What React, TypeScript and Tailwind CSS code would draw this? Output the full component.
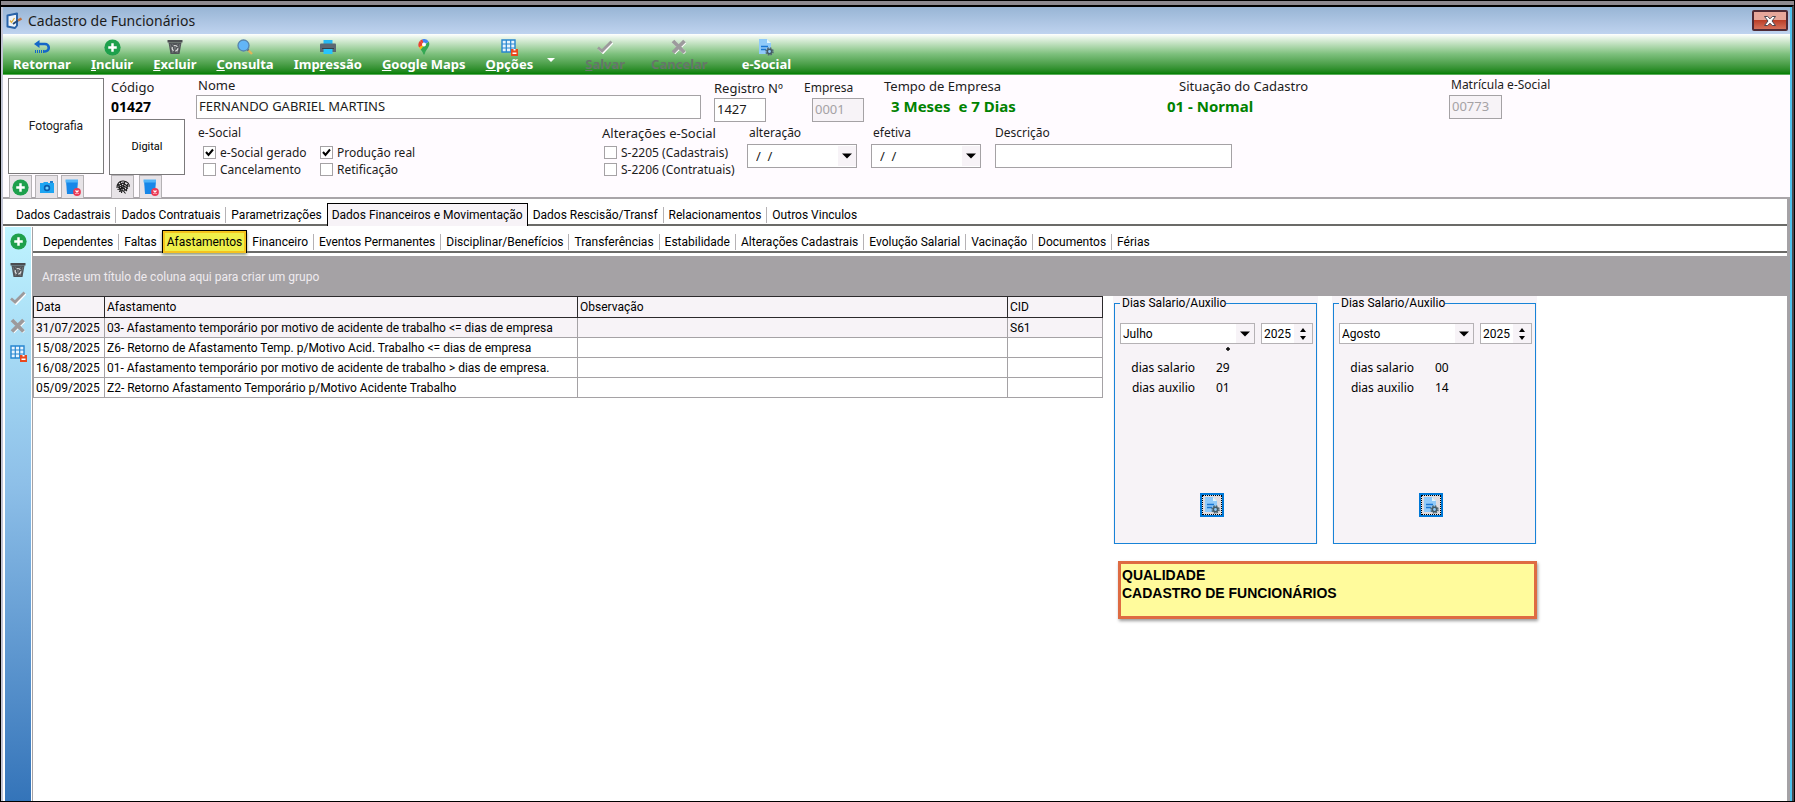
import { useState } from "react";
import type { ReactNode } from "react";
import clsx from "clsx";

const mainTabs = [
    "Dados Cadastrais",
    "Dados Contratuais",
    "Parametrizações",
    "Dados Financeiros e Movimentação",
    "Dados Rescisão/Transf",
    "Relacionamentos",
    "Outros Vinculos",
];

const subTabs = [
    "Dependentes",
    "Faltas",
    "Afastamentos",
    "Financeiro",
    "Eventos Permanentes",
    "Disciplinar/Benefícios",
    "Transferências",
    "Estabilidade",
    "Alterações Cadastrais",
    "Evolução Salarial",
    "Vacinação",
    "Documentos",
    "Férias",
];

const rows = [
    ["31/07/2025", "03- Afastamento temporário por motivo de acidente de trabalho <= dias de empresa", "", "S61"],
    ["15/08/2025", "Z6- Retorno de Afastamento Temp. p/Motivo Acid. Trabalho <= dias de empresa", "", ""],
    ["16/08/2025", "01- Afastamento temporário por motivo de acidente de trabalho > dias de empresa.", "", ""],
    ["05/09/2025", "Z2- Retorno Afastamento Temporário p/Motivo Acidente Trabalho", "", ""],
];

const months = ["Julho", "Agosto", "Setembro"];

export default function App() {
    return (
        <div className="flex min-h-screen flex-col border border-black bg-[#8e8a90] pt-1 font-['Noto_Sans',sans-serif] text-[13px] leading-4 text-[#1c1c1c]">
            <div className="flex grow flex-col border-t-2 border-r-2 border-t-black border-r-[#4b4b50]">
                <div className="flex grow flex-col border-r-2 border-l-2 border-r-[#4fc3ee] border-l-[#c3c6d6] bg-white">
                    <TitleBar />
                    <Toolbar />
                    <EmployeeHeader />
                    <Workspace />
                </div>
            </div>
        </div>
    );
}

function TitleBar() {
    return (
        <header className="flex h-[27px] items-center justify-between bg-linear-to-b from-[#98b5d5] to-[#bfd3ef] pl-0.5">
            <div className="flex items-center gap-[5px]">
                <FormIcon />
                <h1 className="text-sm leading-5">Cadastro de Funcionários</h1>
            </div>
            <button
                aria-label="Fechar"
                className="mr-0.5 flex h-[21px] w-9 items-center justify-center rounded-xs border-2 border-[#4e2a35] bg-linear-to-b from-[#e7a79b] from-50% via-[#bb3f27] via-50% to-[#d5705a]"
            >
                <svg viewBox="0 0 14 12" className="h-3 w-3.5 shrink-0" aria-hidden>
                    <path d="M1.500 1.500h3.200L7 3.800l2.300-2.300h3.200L9 6l3.500 4.500H9.300L7 8.200 4.700 10.500H1.500L5 6Z" fill="#fff" stroke="#4b4650" />
                </svg>
            </button>
        </header>
    );
}

function Toolbar() {
    return (
        <nav className="flex h-[41px] items-start border-b border-[#5cab5c] bg-linear-to-b from-white via-[#7dc07d] via-50% to-[#008000] pt-1 text-white">
            <Tool icon={<UndoIcon />}>Retornar</Tool>
            <Tool icon={<PlusIcon />}><u>I</u>ncluir</Tool>
            <Tool icon={<TrashIcon />}><u>E</u>xcluir</Tool>
            <Tool icon={<SearchIcon />}><u>C</u>onsulta</Tool>
            <Tool icon={<PrinterIcon />}>Imp<u>r</u>essão</Tool>
            <Tool icon={<PinIcon />}><u>G</u>oogle Maps</Tool>
            <Tool icon={<GridIcon />}><u>O</u>pções</Tool>
            <button aria-label="Mais opções" className="mt-5 mr-4 px-1">
                <svg viewBox="0 0 8 4" className="h-1 w-2" aria-hidden>
                    <path d="M0 0h8L4 4Z" fill="#fff" />
                </svg>
            </button>
            <div className="flex gap-1.5 pr-3.5">
                <Tool icon={<CheckIcon />} disabled><u>S</u>alvar</Tool>
                <Tool icon={<CrossIcon />} disabled>Cancelar</Tool>
            </div>
            <Tool icon={<DocIcon />}>e-Social</Tool>
        </nav>
    );
}

function Tool({ icon, disabled, children }: { icon: ReactNode; disabled?: boolean; children: ReactNode }) {
    return (
        <button
            disabled={disabled}
            className={clsx(
                "flex flex-col items-center px-2.5 text-[13px] leading-4 font-bold",
                disabled && "text-[#66766a]"
            )}
        >
            <span className="flex h-[18px] items-center">{icon}</span>
            <span>{children}</span>
        </button>
    );
}

function EmployeeHeader() {
    return (
        <section className="flex h-[124px] items-start border-b-2 border-[#a9a5a9] bg-[#fffbff] pl-[5px]">
            <div className="mt-[3px] flex w-[101px] flex-col gap-px">
                <div className="flex h-24 w-24 items-center justify-center border border-[#7b797b] bg-white font-['Roboto',sans-serif] text-xs">
                    Fotografia
                </div>
                <div className="flex gap-[3px] pl-px">
                    <SmallButton label="Incluir fotografia"><PlusIcon /></SmallButton>
                    <SmallButton label="Câmera"><CameraIcon /></SmallButton>
                    <SmallButton label="Excluir fotografia"><BinIcon /></SmallButton>
                </div>
            </div>
            <div className="mt-1 w-[87px]">
                <div className="pl-0.5">Código</div>
                <div className="mt-0.5 mb-0.5 pl-0.5 text-sm leading-5 font-bold text-black">01427</div>
                <div className="flex h-14 w-[76px] items-center justify-center border border-[#7b797b] bg-white font-['Roboto',sans-serif] text-[11px] text-black">
                    Digital
                </div>
                <div className="flex gap-[5px] pl-0.5">
                    <SmallButton label="Ler digital"><FingerIcon /></SmallButton>
                    <SmallButton label="Excluir digital"><BinIcon /></SmallButton>
                </div>
            </div>

            <div className="grow">
                <div className="grid grid-cols-[518px_90px_80px_283px_282px_1fr]">
                    <div>
                        <label htmlFor="nome" className="block pl-0.5 leading-5">Nome</label>
                        <input id="nome" defaultValue="FERNANDO GABRIEL MARTINS" className="h-6 w-[505px] border border-[#a5a2a5] bg-white px-0.5 pb-0.5 outline-none" />
                    </div>
                    <div className="pt-[3px]">
                        <label htmlFor="registro" className="block leading-5">Registro Nº</label>
                        <input id="registro" defaultValue="1427" className="h-6 w-[52px] border border-[#a5a2a5] bg-white px-0.5 pb-0.5 outline-none" />
                    </div>
                    <div className="pt-[3px]">
                        <label htmlFor="empresa" className="block text-xs leading-5">Empresa</label>
                        <input id="empresa" disabled defaultValue="0001" className="ml-2 h-6 w-[52px] border border-[#a5a2a5] bg-[#f7f3f7] px-0.5 pb-0.5 text-[#a5a2a5]" />
                    </div>
                    <div className="pt-[3px]">
                        <div>Tempo de Empresa</div>
                        <div className="mt-0.5 pl-[7px] text-[15px] leading-5 font-bold whitespace-pre text-[#008200]">3 Meses  e 7 Dias</div>
                    </div>
                    <div className="pt-[3px]">
                        <div className="pl-3">Situação do Cadastro</div>
                        <div className="mt-0.5 text-[15px] leading-5 font-bold text-[#008200]">01 - Normal</div>
                    </div>
                    <div>
                        <label htmlFor="matricula" className="block pl-0.5 text-xs leading-5">Matrícula e-Social</label>
                        <input id="matricula" disabled defaultValue="00773" className="h-6 w-[53px] border border-[#a5a2a5] bg-[#f7f3f7] px-0.5 pb-0.5 text-[#a5a2a5]" />
                    </div>
                </div>
                <div className="grid grid-cols-[406px_145px_124px_124px_1fr]">
                    <div>
                        <div className="pl-0.5 text-xs leading-[22px]">e-Social</div>
                        <div className="grid grid-cols-[117px_120px] pl-[7px]">
                            <Check label="e-Social gerado" checked />
                            <Check label="Produção real" checked />
                            <Check label="Cancelamento" />
                            <Check label="Retificação" />
                        </div>
                    </div>
                    <div>
                        <div className="leading-[22px]">Alterações e-Social</div>
                        <div className="pl-0.5">
                            <Check label="S-2205 (Cadastrais)" />
                            <Check label="S-2206 (Contratuais)" />
                        </div>
                    </div>
                    <DateField id="alteracao" label="alteração" />
                    <DateField id="efetiva" label="efetiva" />
                    <div>
                        <label htmlFor="descricao" className="block text-xs leading-[22px]">Descrição</label>
                        <input id="descricao" className="h-6 w-[237px] border border-[#a5a2a5] bg-white px-0.5 outline-none" />
                    </div>
                </div>
            </div>
        </section>
    );
}

function SmallButton({ label, children }: { label: string; children: ReactNode }) {
    return (
        <button aria-label={label} className="flex h-[23px] w-[23px] items-center justify-center border border-b-0 border-[#b5b2b5] bg-[#e7e3e7]">
            {children}
        </button>
    );
}

function Check({ label, checked }: { label: string; checked?: boolean }) {
    return (
        <label className="flex items-center gap-1 text-xs leading-[17px] whitespace-nowrap">
            <span className="relative flex h-[13px] w-[13px]">
                <input type="checkbox" defaultChecked={checked} className="peer h-[13px] w-[13px] appearance-none border border-[#a5a2a5] bg-white" />
                <svg viewBox="0 0 13 13" className="pointer-events-none absolute inset-0 hidden peer-checked:block" aria-hidden>
                    <path d="m3 6 2.500 3L10 3.500" fill="none" stroke="#000" strokeWidth="2" />
                </svg>
            </span>
            {label}
        </label>
    );
}

function DateField({ id, label }: { id: string; label: string }) {
    return (
        <div>
            <label htmlFor={id} className="block pl-0.5 text-xs leading-[22px]">{label}</label>
            <div className="flex h-6 w-[110px] border border-[#a5a2a5] bg-white">
                <input id={id} defaultValue="/  /" className="min-w-0 grow pl-2 whitespace-pre outline-none" />
                <button aria-label={`Abrir ${label}`} className="my-px flex w-[18px] shrink-0 items-center justify-center bg-[#f7f3f7]">
                    <Caret />
                </button>
            </div>
        </div>
    );
}

function Workspace() {
    const [main, setMain] = useState(mainTabs[3]);
    const [sub, setSub] = useState(subTabs[2]);

    return (
        <main className="flex grow flex-col border-r-[3px] border-[#a5a2a5] font-['Roboto',sans-serif] text-black">
            <div role="tablist" className="flex h-[27px] items-end border-b-2 border-[#6b6b68] pl-2">
                {mainTabs.map((t, i) => (
                    <Tab key={t} active={t === main} divider={i > 0 && t !== main && mainTabs[i - 1] !== main} onClick={() => setMain(t)}>
                        {t}
                    </Tab>
                ))}
            </div>
            <div className="flex grow pt-px pl-0.5">
                <aside className="flex w-[26px] flex-col items-center gap-[11px] bg-linear-to-b from-[#bff4ff] via-[#8dbfe8] via-45% to-[#3474b9] pt-1.5">
                    <SideButton label="Incluir"><PlusIcon /></SideButton>
                    <SideButton label="Excluir"><TrashIcon /></SideButton>
                    <SideButton label="Salvar"><CheckIcon /></SideButton>
                    <SideButton label="Cancelar"><CrossIcon /></SideButton>
                    <SideButton label="Opções"><GridIcon /></SideButton>
                </aside>
                <div className="ml-px flex min-w-0 grow flex-col border-l border-[#a5a2a5]">
                    <div role="tablist" className="flex h-[26px] items-end border-b-2 border-[#6b6b68] pl-[5px]">
                        {subTabs.map((t, i) => (
                            <Tab key={t} marked active={t === sub} divider={i > 0 && t !== sub && subTabs[i - 1] !== sub} onClick={() => setSub(t)}>
                                {t}
                            </Tab>
                        ))}
                    </div>
                    <div className="mt-[3px] flex h-10 items-center bg-[#a5a2a5] pt-0.5 pl-[9px] text-xs text-[#efebef]">
                        Arraste um título de coluna aqui para criar um grupo
                    </div>
                    <div className="flex items-start">
                        <LeaveTable />
                        <div className="ml-2.5">
                            <div className="flex gap-3.5">
                                <DaysPanel id="julho" month="Julho" salary="29" aid="01" marker />
                                <DaysPanel id="agosto" month="Agosto" salary="00" aid="14" />
                            </div>
                            <div className="mt-[17px] ml-[5px] h-[58px] border-[3px] border-[#de6b42] bg-[#fffb9c] pl-px font-['Liberation_Sans',sans-serif] text-sm leading-[18px] font-bold shadow-[1px_2px_3px_#9b9b9b]">
                                <p className="pt-0.5">QUALIDADE</p>
                                <p>CADASTRO DE FUNCIONÁRIOS</p>
                            </div>
                        </div>
                    </div>
                </div>
            </div>
        </main>
    );
}

function Tab({
    active,
    divider,
    marked,
    onClick,
    children,
}: {
    active: boolean;
    divider: boolean;
    marked?: boolean;
    onClick: () => void;
    children: ReactNode;
}) {
    return (
        <button
            role="tab"
            aria-selected={active}
            onClick={onClick}
            className={clsx(
                "relative flex items-center text-xs leading-4 whitespace-nowrap",
                active ? "z-10 -mb-0.5 h-[23px] border-x border-t border-black px-1" : "h-[18px] px-[5px]",
                active && marked && "bg-[#efef4a] shadow-[inset_0_0_0_2px_#f5c31d,0_2px_3px_#8f9a80]",
                active && !marked && "bg-[#f7f3f7]"
            )}
        >
            {divider && <span className="-ml-[5px] mr-[5px] h-4 w-px bg-[#b5b2b5]" />}
            {children}
        </button>
    );
}

function SideButton({ label, children }: { label: string; children: ReactNode }) {
    return (
        <button aria-label={label} className="flex h-[17px] items-center">
            {children}
        </button>
    );
}

function LeaveTable() {
    return (
        <table className="w-[1070px] table-fixed border-collapse text-left text-xs">
            <colgroup>
                <col className="w-[71px]" />
                <col className="w-[473px]" />
                <col className="w-[430px]" />
                <col />
            </colgroup>
            <thead>
                <tr className="h-[21px] bg-[#f7f3f7]">
                    {["Data", "Afastamento", "Observação", "CID"].map((h) => (
                        <th key={h} className="border border-[#2b292b] px-0.5 py-0 font-normal">{h}</th>
                    ))}
                </tr>
            </thead>
            <tbody>
                {rows.map((r, i) => (
                    <tr key={r[0]} className={clsx("h-5", i === 0 && "bg-[#f7f3f7]")}>
                        {r.map((cell, c) => (
                            <td key={c} className="border border-[#a5a2a5] px-0.5 py-0 whitespace-nowrap">{cell}</td>
                        ))}
                    </tr>
                ))}
            </tbody>
        </table>
    );
}

function DaysPanel({
    id,
    month,
    salary,
    aid,
    marker,
}: {
    id: string;
    month: string;
    salary: string;
    aid: string;
    marker?: boolean;
}) {
    return (
        <div className="bg-[#f7f3f7] px-px">
            <fieldset className="h-[248px] w-[203px] border border-[#1883d7] pl-[5px] text-xs">
                <legend className="pl-0.5 leading-[14px]">Dias Salario/Auxilio</legend>
                <div className="mt-[13px] flex gap-1.5">
                    <span className="relative">
                        <select aria-label="Mês" defaultValue={month} className="h-[21px] w-[135px] appearance-none border border-[#b5b2b5] bg-white px-0.5 outline-none">
                            {months.map((m) => (
                                <option key={m}>{m}</option>
                            ))}
                        </select>
                        <span className="pointer-events-none absolute inset-y-px right-px flex w-[18px] items-center justify-center bg-[#f7f3f7]">
                            <Caret />
                        </span>
                    </span>
                    <span className="flex h-[21px] w-[52px] border border-[#b5b2b5] bg-white">
                        <input aria-label="Ano" defaultValue="2025" className="min-w-0 grow pl-0.5 outline-none" />
                        <span className="flex w-[18px] shrink-0 flex-col justify-center gap-1 bg-[#f7f3f7]">
                            <button aria-label="Próximo ano" className="flex justify-center">
                                <svg viewBox="0 0 6 4" className="h-1 w-1.5" aria-hidden><path d="M0 4h6L3 0Z" /></svg>
                            </button>
                            <button aria-label="Ano anterior" className="flex justify-center">
                                <svg viewBox="0 0 6 4" className="h-1 w-1.5" aria-hidden><path d="M0 0h6L3 4Z" /></svg>
                            </button>
                        </span>
                    </span>
                </div>
                <div className="flex h-4 justify-end pr-[86px]">
                    {marker && (
                        <svg viewBox="0 0 4 4" className="mt-[3px] h-1 w-1" aria-hidden>
                            <path d="M2 0v4M0 2h4" stroke="#000" strokeWidth="1.400" />
                        </svg>
                    )}
                </div>
                <dl className="grid grid-cols-[75px_auto] gap-x-[21px] gap-y-1 font-['Noto_Sans',sans-serif]">
                    <dt className="text-right">dias salario</dt>
                    <dd id={`${id}-salario`}>{salary}</dd>
                    <dt className="text-right">dias auxilio</dt>
                    <dd id={`${id}-auxilio`}>{aid}</dd>
                </dl>
                <button aria-label={`Calcular ${month}`} className="mt-[97px] ml-20 flex h-6 w-6 items-center justify-center border-2 border-[#0078d7] bg-[#dedbde] outline-1 -outline-offset-3 outline-dotted outline-black">
                    <DocIcon />
                </button>
            </fieldset>
        </div>
    );
}

function Caret() {
    return (
        <svg viewBox="0 0 10 6" className="h-1.5 w-2.5" aria-hidden>
            <path d="M0 0.500h10L5 5.500Z" />
        </svg>
    );
}

function FormIcon() {
    return (
        <svg viewBox="0 0 18 18" className="h-[18px] w-[18px]" aria-hidden>
            <path d="M2.500 3.500 12 1.500v12l-2 2.500-7.500-1.500Z" fill="#eef4fb" stroke="#2a63a8" strokeWidth="2" strokeLinejoin="round" />
            <path d="m5 8.500 1.500 2L9.500 6" fill="none" stroke="#e0b040" strokeWidth="1.300" />
            <path d="m8 12 5-3.500" stroke="#274a75" strokeWidth="2" />
            <path d="m13 8.500 3.500-2" stroke="#c2703a" strokeWidth="2.500" />
        </svg>
    );
}

function UndoIcon() {
    return (
        <svg viewBox="0 0 16 14" className="h-3.5 w-4" aria-hidden>
            <path d="M4 4h7a3.500 3.500 0 0 1 0 7.500h-1" fill="none" stroke="#1467c8" strokeWidth="2.600" />
            <path d="M5.500 0v8L0 4Z" fill="#1467c8" />
            <path d="M1 11.500h9" stroke="#1467c8" strokeWidth="3" strokeDasharray="1 1" />
        </svg>
    );
}

function PlusIcon() {
    return (
        <svg viewBox="0 0 18 18" className="h-[17px] w-[17px]" aria-hidden>
            <circle cx="9" cy="9" r="8.600" fill="#1ea04c" />
            <path d="M9 4.500v9M4.500 9h9" stroke="#fff" strokeWidth="2.600" />
        </svg>
    );
}

function TrashIcon() {
    return (
        <svg viewBox="0 0 16 16" className="h-4 w-4" aria-hidden>
            <path d="M0.500 1h15v2.500h-15Z" fill="#4a4c50" />
            <path d="M1.500 3.500h13l-2 11.500h-9Z" fill="#505357" />
            <path d="m3 5 3 9M13 5l-3 9M5 4.500l6 9M11 4.500l-6 9" stroke="#8d9093" strokeWidth="0.500" />
            <circle cx="8" cy="9.300" r="2.800" fill="none" stroke="#dcdcdc" strokeWidth="1.200" strokeDasharray="4 1.800" />
        </svg>
    );
}

function SearchIcon() {
    return (
        <svg viewBox="0 0 16 16" className="h-4 w-4" aria-hidden>
            <path d="m11 11 4 4" stroke="#e0b35a" strokeWidth="2.400" />
            <path d="m9.500 9.500 2 2" stroke="#5d6f80" strokeWidth="2" />
            <circle cx="6.500" cy="6.500" r="5.500" fill="#62b5f7" stroke="#5784ad" strokeWidth="1.300" />
        </svg>
    );
}

function PrinterIcon() {
    return (
        <svg viewBox="0 0 16 14" className="h-3.5 w-4" aria-hidden>
            <path d="M3.500 0h9v4h-9Z" fill="#26b8f2" />
            <path d="M1 3.500h14q1 0 1 1V12H0V4.500q0-1 1-1Z" fill="#5b6873" />
            <path d="M3.500 9h9v5h-9Z" fill="#27c4fb" />
            <path d="M2 8.500h12" stroke="#33414c" />
        </svg>
    );
}

function PinIcon() {
    return (
        <svg viewBox="0 0 12 16" className="h-4 w-3" aria-hidden>
            <path d="M1.800 2.100A5.600 5.600 0 0 1 4.500.3L6 5.600 4.200 4.200Z" fill="#ea4335" />
            <path d="M1.800 2.100A5.600 5.600 0 0 0 1.100 8.500L6 5.600Z" fill="#ea4335" />
            <path d="M4.300.3a5.600 5.600 0 0 1 6.500 2.600L6 5.600Z" fill="#4285f4" />
            <path d="M1.100 8.500 2.600 10.700 6.500 6 6 5.600Z" fill="#fbbc04" />
            <path d="M10.800 2.700c1.400 3-.2 5.500-2 7.700C7.600 12 7.100 13.500 6.700 15q-.7 1.500-1.400 0C4.900 13.500 4.300 12.200 2.600 10.700L6.500 6Z" fill="#34a853" />
            <circle cx="6" cy="5.600" r="2" fill="#fff" />
        </svg>
    );
}

function GridIcon() {
    return (
        <svg viewBox="0 0 17 17" className="h-[17px] w-[17px]" aria-hidden>
            <path d="M1 1h13v12H1Z" fill="#e8f4fd" stroke="#2685cf" strokeWidth="1.400" />
            <path d="M5.300 1v12M9.700 1v12M1 5h13M1 9h13" stroke="#2685cf" strokeWidth="1.200" />
            <path d="M10 10h7v7h-7Z" fill="#e8481c" />
            <path d="M11.500 13.500h4V15h-4ZM12.500 10h2v1.500h-2Z" fill="#fff" />
        </svg>
    );
}

function CheckIcon() {
    return (
        <svg viewBox="0 0 16 14" className="h-3.5 w-4" aria-hidden>
            <path d="m2 8.500 4 4L15.500 2.500" fill="none" stroke="#fff" strokeWidth="2.500" />
            <path d="m1 7.500 4 3.500 9.500-9.500" fill="none" stroke="#9c9a9c" strokeWidth="2.800" />
        </svg>
    );
}

function CrossIcon() {
    return (
        <svg viewBox="0 0 16 16" className="h-4 w-4" aria-hidden>
            <path d="m3 3 11 11M14 3 3 14" stroke="#fff" strokeWidth="3.500" />
            <path d="m2 2 11.500 11.500M13.500 2 2 13.500" stroke="#9c9a9c" strokeWidth="3.800" />
        </svg>
    );
}

function DocIcon() {
    return (
        <svg viewBox="0 0 16 17" className="h-[17px] w-4" aria-hidden>
            <path d="M1 0h8l4 4v11H1Z" fill="#90caf9" />
            <path d="M9 0v4h4Z" fill="#e1f5fe" />
            <path d="M3 7.500h7M3 10.500h5" stroke="#1976d2" strokeWidth="1.600" />
            <circle cx="11.500" cy="12.500" r="3.500" fill="none" stroke="#546e7a" strokeWidth="1.600" strokeDasharray="1.600 1.150" />
            <circle cx="11.500" cy="12.500" r="2.200" fill="none" stroke="#455a64" strokeWidth="1.600" />
        </svg>
    );
}

function CameraIcon() {
    return (
        <svg viewBox="0 0 14 12" className="h-3 w-3.5" aria-hidden>
            <path d="M0 2h3.500V1H8v1h6v10H0Z" fill="#1ea5f2" />
            <path d="M10 0h3v2h-3Z" fill="#1b7fd0" />
            <circle cx="7" cy="7" r="3.200" fill="#0c5cab" />
            <circle cx="7" cy="7" r="1.600" fill="#6cd0ff" />
        </svg>
    );
}

function BinIcon() {
    return (
        <svg viewBox="0 0 16 17" className="h-[17px] w-4" aria-hidden>
            <path d="M1 1.500h12L12 15H2Z" fill="#1787e8" />
            <path d="M0.500 0.500h12.500v3H0.500Z" fill="#50b4f8" />
            <circle cx="12" cy="13" r="3.900" fill="#ec3a55" />
            <path d="m10.500 11.500 3 3M13.500 11.500l-3 3" stroke="#fff" strokeWidth="1.200" />
        </svg>
    );
}

function FingerIcon() {
    return (
        <svg viewBox="0 0 16 16" className="h-4 w-4" fill="none" stroke="#1a1a1a" strokeWidth="1.100" aria-hidden>
            <path d="M2 9C1.500 5 4.500 1.500 8.500 2s6.500 3 5.500 6" />
            <path d="M3.500 6.500 8 4l5 3.500M3 8.500 8 6.500l5 3M2.500 10.500 8 9l4 3M4 12.500 8 11.500l2.500 3" />
            <path d="M5 2.500 7 7l-2 5M10 2.500 8.500 7l1.500 5M12.500 5l-1 6M3.500 5l1.500 6M6.500 14l1-6" />
        </svg>
    );
}
